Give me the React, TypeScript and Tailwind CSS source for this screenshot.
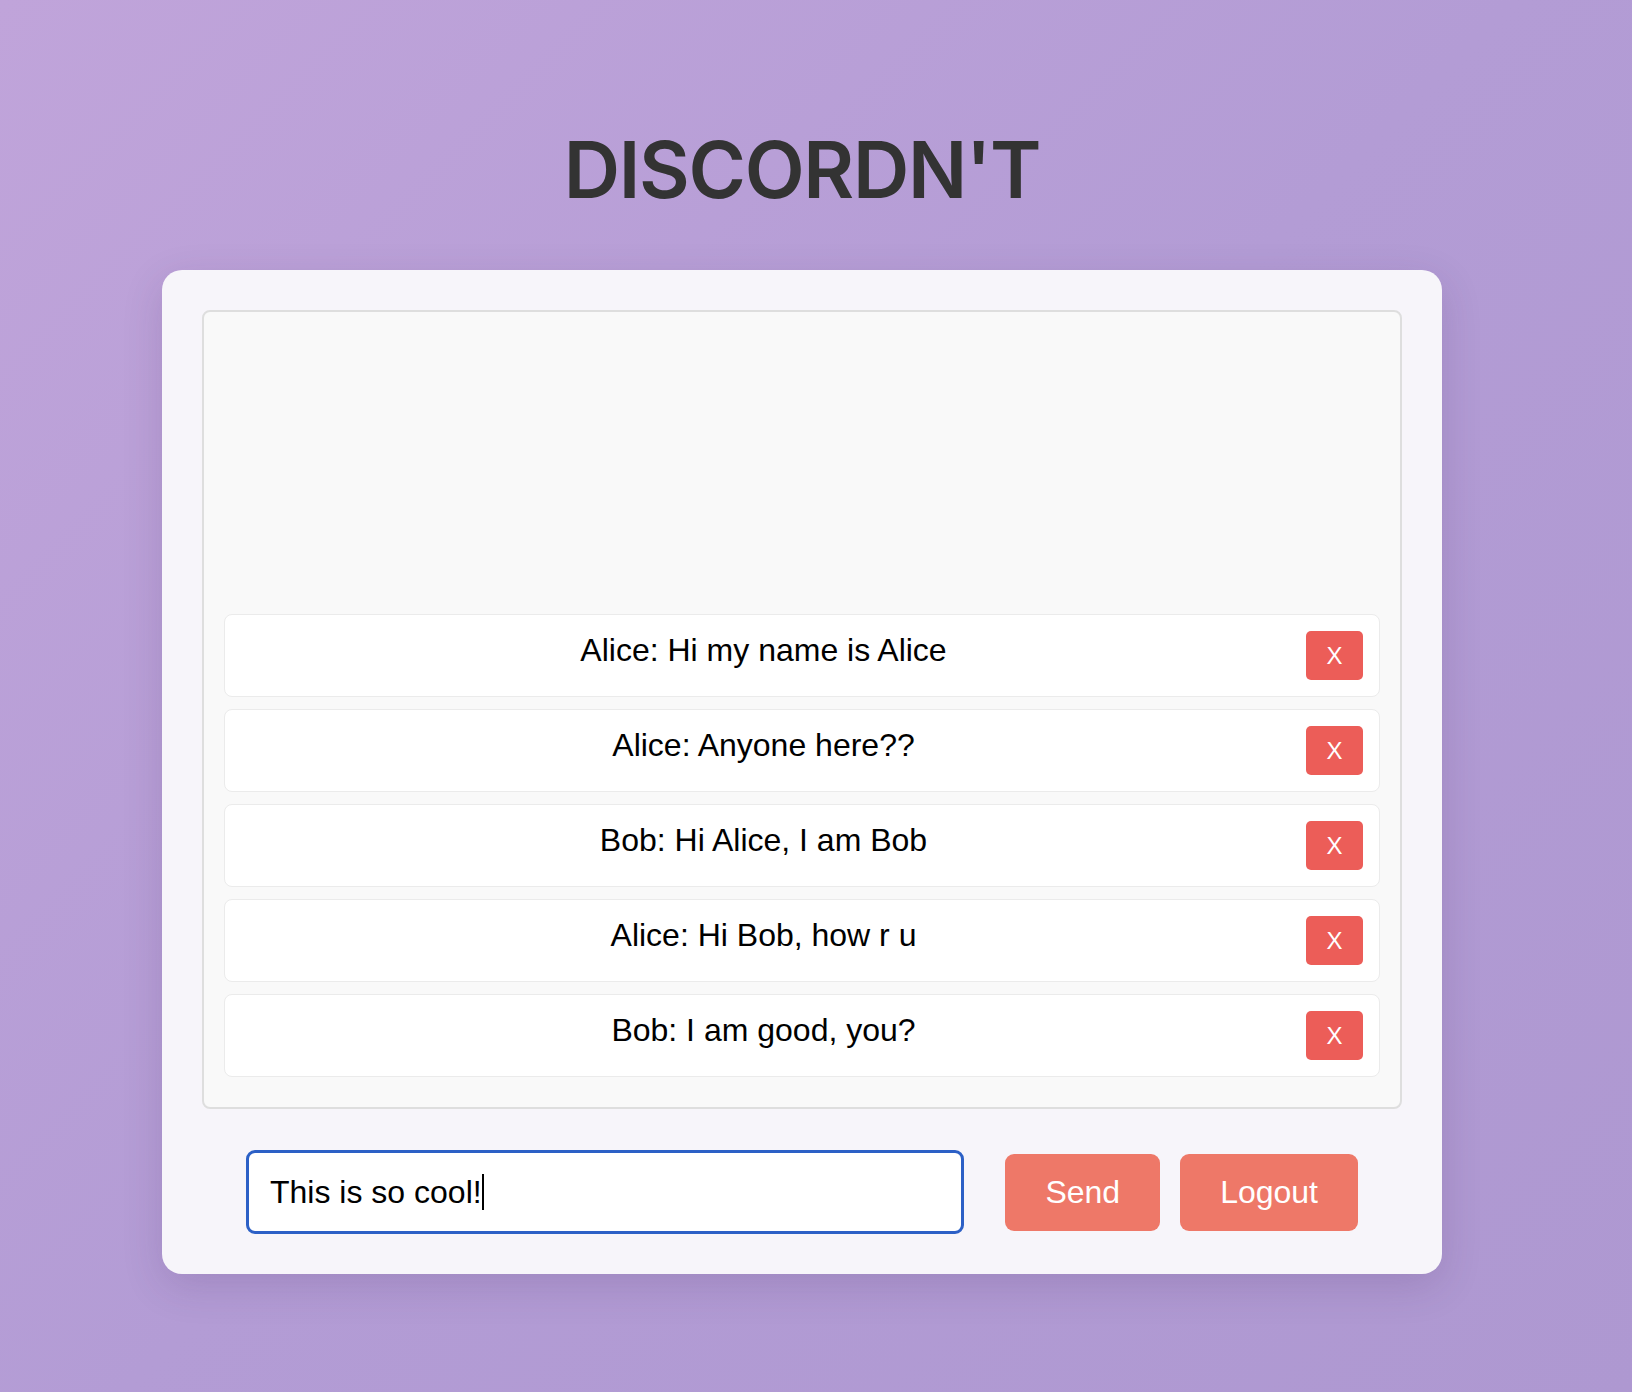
import { useEffect, useRef, useState } from 'react';

type Message = { id: number; user: string; text: string };

const initialMessages: Message[] = [
  { id: 1, user: 'Alice', text: 'Hi my name is Alice' },
  { id: 2, user: 'Alice', text: 'Anyone here??' },
  { id: 3, user: 'Bob', text: 'Hi Alice, I am Bob' },
  { id: 4, user: 'Alice', text: 'Hi Bob, how r u' },
  { id: 5, user: 'Bob', text: 'I am good, you?' },
];

export default function App() {
  const [messages, setMessages] = useState<Message[]>(initialMessages);
  const [draft, setDraft] = useState('This is so cool!');
  const [focused, setFocused] = useState(true);
  const inputRef = useRef<HTMLInputElement>(null);

  // put the caret at the end of the draft, like the user just typed it
  useEffect(() => {
    const el = inputRef.current;
    if (!el) return;
    el.focus();
    el.setSelectionRange(el.value.length, el.value.length);
  }, []);

  function handleSend() {
    if (!draft.trim()) return;
    setMessages([...messages, { id: Date.now(), user: 'Alice', text: draft.trim() }]);
    setDraft('');
  }

  return (
    <div
      className="min-h-screen w-full bg-[linear-gradient(135deg,#c0a4da_0%,#b39cd5_50%,#ae98d1_100%)] pr-[28px] pt-[131px] pb-[118px] flex flex-col items-center"
      style={{ fontFamily: '"Liberation Sans", Arial, sans-serif' }}
    >
      <h1
        className="text-[78px] leading-none font-semibold text-[#333333] tracking-[-1.3px]"
        style={{ fontFamily: 'Inter, "Noto Sans", sans-serif' }}
      >
        DISCORDN'T
      </h1>

      <div className="mt-[61px] w-[1280px] rounded-[20px] bg-[#f7f5fa] p-10 shadow-[0_12px_40px_rgba(60,30,90,0.16)]">
        {/* Message list */}
        <div className="h-[799px] rounded-lg border-2 border-[#dedede] bg-[#f9f9f9] px-5 pt-5 pb-[18px] flex flex-col justify-end">
          {messages.map((m) => (
            <div
              key={m.id}
              className="mb-3 flex items-center rounded-lg border border-[#ebebeb] bg-white py-4 pl-4 pr-4"
            >
              <span className="mb-3 flex-1 text-center text-[32px] leading-none text-black">
                {m.user}: {m.text}
              </span>
              <button
                onClick={() => setMessages(messages.filter((x) => x.id !== m.id))}
                className="ml-5 flex h-[49px] w-[57px] items-center justify-center rounded-[5px] bg-[#ec5d58] text-[24px] text-white"
              >
                X
              </button>
            </div>
          ))}
        </div>

        {/* Composer */}
        <div className="mt-[41px] flex items-center px-[44px]">
          <div className="relative min-w-0 flex-1">
            <input
              ref={inputRef}
              value={draft}
              onChange={(e) => setDraft(e.target.value)}
              onFocus={() => setFocused(true)}
              onBlur={() => setFocused(false)}
              className="h-[84px] w-full rounded-[9px] border-[3px] border-[#2c60c6] bg-white px-[21px] text-[32px] text-black caret-transparent outline-none"
            />
            {focused && draft === 'This is so cool!' && (
              <span className="pointer-events-none absolute left-[236px] top-[24px] h-[36px] w-[2px] bg-black" />
            )}
          </div>
          <button
            onClick={handleSend}
            className="ml-[41px] h-[77px] rounded-[9px] bg-[#ee7868] px-10 text-[32px] text-white"
          >
            Send
          </button>
          <button className="ml-5 h-[77px] rounded-[9px] bg-[#ee7868] px-10 text-[32px] text-white">
            Logout
          </button>
        </div>
      </div>
    </div>
  );
}
